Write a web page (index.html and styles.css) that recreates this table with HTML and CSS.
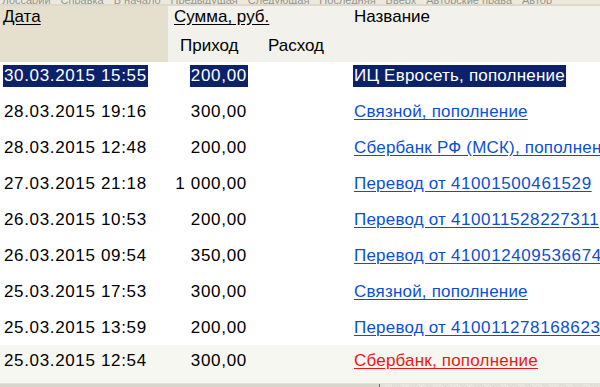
FILE: index.html
```html
<!DOCTYPE html>
<html lang="ru">
<head>
<meta charset="utf-8">
<link rel="stylesheet" href="styles.css">
</head>
<body>
<div class="page">
  <nav class="menu">
    <span>Глоссарий</span><span>Справка</span><span>В начало</span><span>Предыдущая</span><span>Следующая</span><span>Последняя</span><span>Вверх</span><span>Авторские права</span><span>Автор</span>
  </nav>
  <div class="head">
    <div class="hcol-date"><span class="ul">Дата</span></div>
    <div class="hcol-rest">
      <div class="hrow1">
        <span class="ul sum">Сумма, руб.</span>
        <span class="title">Название</span>
      </div>
      <div class="hrow2">
        <span class="in">Приход</span>
        <span class="out">Расход</span>
      </div>
    </div>
  </div>
  <div class="rows">
    <div class="row sel"><div class="c-date"><span class="hl">30.03.2015 15:55</span></div><div class="c-in"><span class="hl">200,00</span></div><div class="c-out"></div><div class="c-name"><span class="hl">ИЦ Евросеть, пополнение</span></div></div>
    <div class="row"><div class="c-date">28.03.2015 19:16</div><div class="c-in">300,00</div><div class="c-out"></div><div class="c-name"><a href="#">Связной, пополнение</a></div></div>
    <div class="row"><div class="c-date">28.03.2015 12:48</div><div class="c-in">200,00</div><div class="c-out"></div><div class="c-name"><a href="#">Сбербанк РФ (МСК), пополнение</a></div></div>
    <div class="row"><div class="c-date">27.03.2015 21:18</div><div class="c-in">1 000,00</div><div class="c-out"></div><div class="c-name"><a href="#">Перевод от <span class="num">41001500461529</span></a></div></div>
    <div class="row"><div class="c-date">26.03.2015 10:53</div><div class="c-in">200,00</div><div class="c-out"></div><div class="c-name"><a href="#">Перевод от <span class="num">410011528227311</span></a></div></div>
    <div class="row"><div class="c-date">26.03.2015 09:54</div><div class="c-in">350,00</div><div class="c-out"></div><div class="c-name"><a href="#">Перевод от <span class="num">410012409536674</span></a></div></div>
    <div class="row"><div class="c-date">25.03.2015 17:53</div><div class="c-in">300,00</div><div class="c-out"></div><div class="c-name"><a href="#">Связной, пополнение</a></div></div>
    <div class="row short"><div class="c-date">25.03.2015 13:59</div><div class="c-in">200,00</div><div class="c-out"></div><div class="c-name"><a href="#">Перевод от <span class="num">410011278168623</span></a></div></div>
    <div class="row hover"><div class="c-date">25.03.2015 12:54</div><div class="c-in">300,00</div><div class="c-out"></div><div class="c-name"><a href="#" class="red">Сбербанк, пополнение</a></div></div>
  </div>
  <div class="scroll"><div class="track"></div><div class="rest"></div></div>
</div>
</body>
</html>
```

FILE: styles.css
```css
* { box-sizing: border-box; }
html, body { margin: 0; padding: 0; }
body {
  width: 600px;
  height: 387px;
  overflow: hidden;
  background: #fff;
  font-family: "Liberation Sans", Arial, sans-serif;
  font-size: 17px;
  color: #000;
}
.page { display: flex; flex-direction: column; height: 387px; }

.menu {
  height: 4px;
  overflow: hidden;
  background: #ece9dc;
  display: flex;
  align-items: flex-end;
  gap: 10px;
  font-size: 11px;
  color: #94948e;
  white-space: nowrap;
  flex: none;
}
.menu span { line-height: 8px; display: block; }
.menu span:first-child { margin-left: -3px; }

.head {
  display: flex;
  height: 58px;
  flex: none;
  border-top: 2px solid #dcd9cc;
}
.hcol-date {
  width: 168px;
  background: #e4e0cd;
  padding: 1px 0 0 3px;
  line-height: 20px;
}
.hcol-rest {
  flex: 1;
  background: #f2f1eb;
  display: flex;
  flex-direction: column;
  padding-top: 1px;
}
.ul { text-decoration: underline; text-underline-offset: 2px; }
.hrow1 { display: flex; line-height: 20px; }
.sum { margin-left: 6px; width: 180px; }
.hrow2 { display: flex; line-height: 20px; padding-top: 9px; }
.in { margin-left: 12px; width: 88px; }

.rows { flex: 1; display: flex; flex-direction: column; }
.row {
  display: grid;
  grid-template-columns: 168px 80px 106px 1fr;
  height: 36px;
  padding-top: 3px;
  line-height: 22px;
  white-space: nowrap;
  flex: none;
}
.row.short { height: 31px; }
.row.hover { background: #f7f7f2; height: 38px; padding-top: 5px; }
.c-date { padding-left: 4px; letter-spacing: 0.65px; }
.c-in { text-align: right; padding-right: 1px; letter-spacing: 0.7px; }
.c-name { letter-spacing: 0.2px; }
.num { letter-spacing: 0.6px; }
.hl { background: #0b216a; color: #fff; display: inline-block; padding: 0 1px; margin-left: -1px; }
.c-in .hl { margin-right: -1px; }
a { color: #0d4fd3; text-decoration: underline; text-underline-offset: 2px; }
a.red { color: #f01515; }

.scroll { height: 6px; display: flex; border-top: 1px solid #e3e1da; flex: none; margin-top: auto; }
.track { width: 380px; background: #d8d5cd; border-right: 1px solid #6e6e6e; }
.rest {
  flex: 1;
  background-color: #ebe9e3;
  background-image: repeating-linear-gradient(45deg, #dcdad3 0 1px, transparent 1px 2px);
}
```
